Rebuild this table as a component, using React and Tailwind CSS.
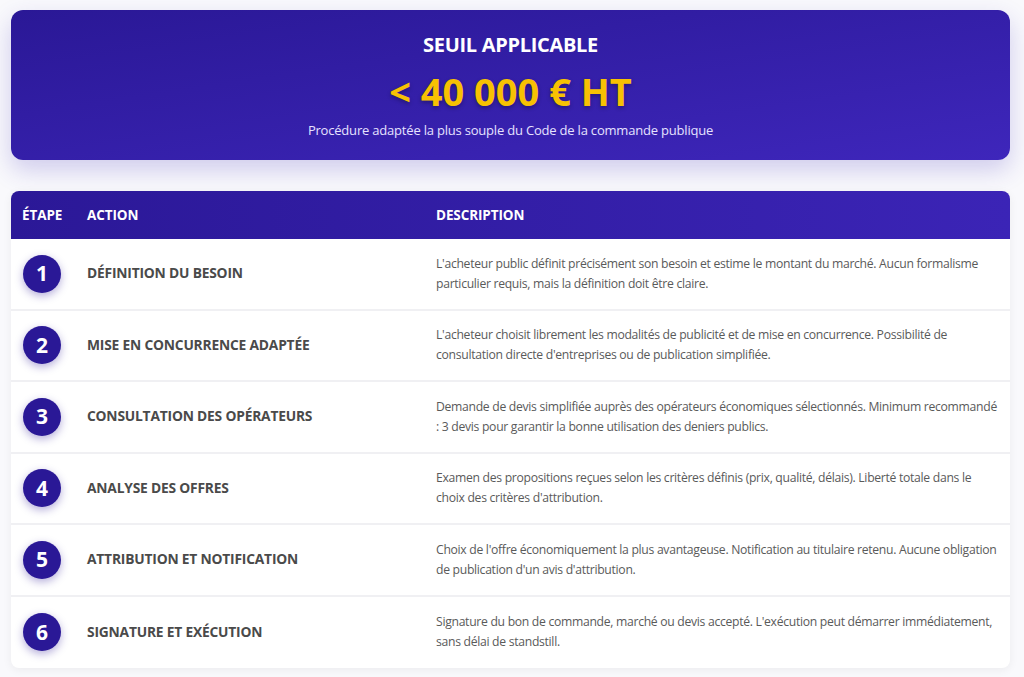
const STEPS = [
  {
    n: 1,
    action: 'Définition du besoin',
    desc: "L'acheteur public définit précisément son besoin et estime le montant du marché. Aucun formalisme particulier requis, mais la définition doit être claire.",
  },
  {
    n: 2,
    action: 'Mise en concurrence adaptée',
    desc: "L'acheteur choisit librement les modalités de publicité et de mise en concurrence. Possibilité de consultation directe d'entreprises ou de publication simplifiée.",
  },
  {
    n: 3,
    action: 'Consultation des opérateurs',
    desc: 'Demande de devis simplifiée auprès des opérateurs économiques sélectionnés. Minimum recommandé : 3 devis pour garantir la bonne utilisation des deniers publics.',
  },
  {
    n: 4,
    action: 'Analyse des offres',
    desc: "Examen des propositions reçues selon les critères définis (prix, qualité, délais). Liberté totale dans le choix des critères d'attribution.",
  },
  {
    n: 5,
    action: 'Attribution et notification',
    desc: "Choix de l'offre économiquement la plus avantageuse. Notification au titulaire retenu. Aucune obligation de publication d'un avis d'attribution.",
  },
  {
    n: 6,
    action: 'Signature et exécution',
    desc: "Signature du bon de commande, marché ou devis accepté. L'exécution peut démarrer immédiatement, sans délai de standstill.",
  },
]

export default function App() {
  return (
    <div className="min-h-[677px] bg-[#f9f9fc] pl-[11px] pr-[14px] pt-[10px] pb-2 font-['Open_Sans','Noto_Sans',sans-serif]">
      <div className="rounded-xl bg-gradient-to-br from-[#2a1896] to-[#3e26bb] shadow-[0_10px_24px_rgba(60,40,180,0.22)] h-[150px] flex flex-col items-center pt-[21px]">
        <div className="text-white font-bold text-[20px] leading-[28px] tracking-[-0.3px]">SEUIL APPLICABLE</div>
        <div className="text-[#f7c103] font-bold text-[38px] leading-[48px] mt-[8px] [text-shadow:0_2px_4px_rgba(0,0,0,0.3)]">&lt; 40 000 € HT</div>
        <div className="text-[#e6e2ff] text-[13px] leading-[18px] mt-[6px] tracking-[-0.2px]">Procédure adaptée la plus souple du Code de la commande publique</div>
      </div>

      <div className="mt-[31px] rounded-lg bg-white shadow-[0_2px_10px_rgba(0,0,0,0.06)] overflow-hidden">
        <div className="grid grid-cols-[64px_349px_1fr] h-[48px] items-center bg-gradient-to-r from-[#2b1897] to-[#3b24b6] text-white font-bold text-[13.5px] tracking-[-0.1px]">
          <div className="pl-[11px]">ÉTAPE</div>
          <div className="pl-3">ACTION</div>
          <div className="pl-3">DESCRIPTION</div>
        </div>
        {STEPS.map((s, i) => (
          <div
            key={s.n}
            className={`grid grid-cols-[64px_349px_1fr] h-[71.5px] items-center ${i < STEPS.length - 1 ? 'border-b-2 border-[#f0f0f3]' : ''}`}
          >
            <div className="pl-3">
              <div className="w-[38px] h-[38px] rounded-full bg-[#2a1896] text-white font-bold text-[21px] flex items-center justify-center shadow-[0_3px_8px_rgba(42,24,150,0.35)]">
                {s.n}
              </div>
            </div>
            <div className="pl-3 uppercase font-bold text-[13.8px] text-[#4a4a4a] tracking-[-0.2px]">{s.action}</div>
            <div className="pl-3 pr-[10px] text-[12.2px] leading-[20px] text-[#5a5a5a] tracking-[-0.3px]">{s.desc}</div>
          </div>
        ))}
      </div>
    </div>
  )
}
